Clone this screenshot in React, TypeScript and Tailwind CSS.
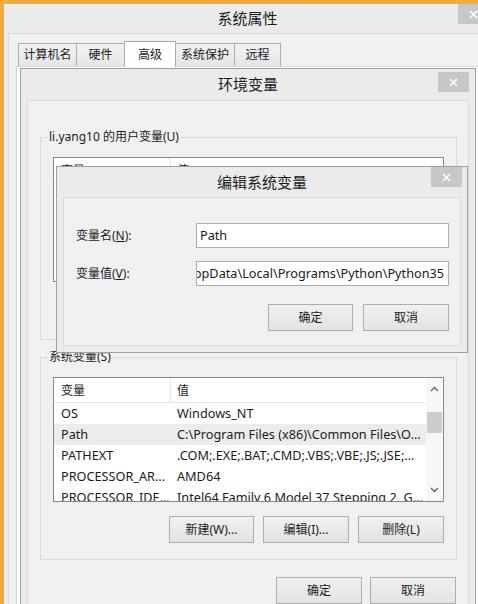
import React from 'react'

type Row = { name: string; value: string; selected?: boolean }

const systemRows: Row[] = [
  { name: 'OS', value: 'Windows_NT' },
  { name: 'Path', value: 'C:\\Program Files (x86)\\Common Files\\O...', selected: true },
  { name: 'PATHEXT', value: '.COM;.EXE;.BAT;.CMD;.VBS;.VBE;.JS;.JSE;...' },
  { name: 'PROCESSOR_AR...', value: 'AMD64' },
  { name: 'PROCESSOR_IDE...', value: 'Intel64 Family 6 Model 37 Stepping 2, G...' },
]

const userRows: Row[] = [
  { name: 'PATH', value: 'C:\\Users\\li.yang10\\AppData\\Local\\Programs\\...' },
  { name: 'TEMP', value: '%USERPROFILE%\\AppData\\Local\\Temp' },
  { name: 'TMP', value: '%USERPROFILE%\\AppData\\Local\\Temp' },
]

const tabs = [
  { label: '计算机名', w: 'w-[59px]' },
  { label: '硬件', w: 'w-[47px]' },
  { label: '高级', w: 'w-[52px]', active: true },
  { label: '系统保护', w: 'w-[59px]' },
  { label: '远程', w: 'w-[46px]' },
]

function CloseButton() {
  return (
    <div className="flex h-[20px] w-[31px] items-center justify-center bg-[#c7c7c7]">
      <svg width="9" height="9" viewBox="0 0 9 9">
        <path d="M1 1L8 8M8 1L1 8" stroke="#ffffff" strokeWidth="1.6" />
      </svg>
    </div>
  )
}

function Button({ label, w = 'w-[86px]' }: { label: string; w?: string }) {
  return (
    <div
      className={`flex h-[27px] ${w} items-center justify-center border border-[#adadad] bg-linear-to-b from-[#f0f0f0] to-[#e3e3e3] text-[12px] text-[#1b1b1b]`}
    >
      {label}
    </div>
  )
}

function Chevron({ up }: { up?: boolean }) {
  return (
    <svg width="9" height="6" viewBox="0 0 9 6">
      <path
        d={up ? 'M1 5L4.5 1.5L8 5' : 'M1 1L4.5 4.5L8 1'}
        stroke="#5f5f5f"
        strokeWidth="1.3"
        fill="none"
      />
    </svg>
  )
}

function VarList({ rows }: { rows: Row[] }) {
  return (
    <div className="flex h-[125px] w-[391px] overflow-hidden border border-[#828790] bg-white text-[#1b1b1b]">
      <div className="flex flex-1 flex-col">
        <div className="flex h-[25px] shrink-0 border-b border-[#e5e5e5] text-[12px]">
          <div className="flex w-[117px] items-center border-r border-[#e5e5e5] pl-[7px] pt-[1px]">变量</div>
          <div className="flex items-center pl-[6px] pt-[1px]">值</div>
        </div>
        {rows.map((r) => (
          <div
            key={r.name}
            className={`flex h-[21px] shrink-0 items-center whitespace-nowrap text-[12.7px] ${r.selected ? 'bg-[#ececec]' : ''}`}
          >
            <div className="w-[117px] overflow-hidden pl-[7px]">{r.name}</div>
            <div className="flex-1 overflow-hidden pl-[6px]">{r.value}</div>
          </div>
        ))}
      </div>
      <div className="flex w-[17px] flex-col items-center bg-[#f7f7f7]">
        <div className="flex h-[21px] items-center">
          <Chevron up />
        </div>
        <div className="mt-[13px] h-[21px] w-[15px] bg-[#cdcdcd]" />
        <div className="flex-1" />
        <div className="flex h-[22px] items-center">
          <Chevron />
        </div>
      </div>
    </div>
  )
}

function VarGroup({
  title,
  rows,
  buttons,
  className = '',
}: {
  title: string
  rows: Row[]
  buttons: string[]
  className?: string
}) {
  return (
    <fieldset className={`border border-[#d9d9d9] p-0 ${className}`}>
      <legend className="ml-[7px] px-[1px] text-[12px] leading-[16px] text-[#1b1b1b]">{title}</legend>
      <div className="flex flex-col px-[12px] pb-[16px] pt-[12px]">
        <VarList rows={rows} />
        <div className="mt-[14px] flex justify-end gap-[9px]">
          {buttons.map((b, i) => (
            <Button key={b} label={b} w={i === 0 ? 'w-[85px]' : 'w-[86px]'} />
          ))}
        </div>
      </div>
    </fieldset>
  )
}

export default function App() {
  return (
    <div className="relative h-[604px] w-[478px] overflow-hidden bg-[#f2ab38] font-['Noto_Sans','Noto_Sans_CJK_SC',sans-serif] text-[#1b1b1b]">
      {/* 系统属性 */}
      <div className="absolute left-[3px] top-[3px] flex h-[640px] w-[488px] flex-col border-l border-t border-[#b4b4b4] bg-[#ebebeb]">
        <div className="grid h-[29px] shrink-0 grid-cols-[1fr_auto_1fr]">
          <div />
          <div className="self-center text-[15px]">系统属性</div>
          <div className="mr-[2px] justify-self-end">
            <CloseButton />
          </div>
        </div>
        <div className="ml-[4px] flex flex-1 flex-col border-l border-t border-[#d9d9d9] bg-[#f0f0f0]">
          <div className="relative z-10 flex h-[33px] items-end pl-[9px] text-[12px]">
            {tabs.map((t, i) =>
              t.active ? (
                <div
                  key={t.label}
                  className={`flex h-[26px] ${t.w} items-start justify-center border border-b-0 border-[#acacac] bg-white pt-[4px]`}
                >
                  {t.label}
                </div>
              ) : (
                <div
                  key={t.label}
                  className={`mb-[1px] flex h-[23px] ${t.w} items-center justify-center border-t border-[#acacac] bg-linear-to-b from-[#f2f2f2] to-[#e6e6e6] ${
                    i === 0 ? 'border-l' : ''
                  } ${i === tabs.length - 1 ? 'border-r' : ''} ${tabs[i + 1]?.active ? '' : 'border-r'}`}
                >
                  {t.label}
                </div>
              )
            )}
          </div>
          <div className="-mt-[1px] ml-[7px] flex-1 border border-[#d9d9d9] bg-white" />
        </div>
      </div>

      {/* 环境变量 */}
      <div className="absolute left-[20px] top-[68px] flex h-[560px] w-[456px] flex-col border border-[#a0a0a0] bg-[#ebebeb]">
        <div className="grid h-[31px] shrink-0 grid-cols-[1fr_auto_1fr]">
          <div />
          <div className="self-center text-[15px]">环境变量</div>
          <div className="mr-[6px] mt-[3px] justify-self-end">
            <CloseButton />
          </div>
        </div>
        <div className="mx-[6px] flex flex-1 flex-col border border-[#d9d9d9] bg-[#f0f0f0] pl-[12px] pr-[11px]">
          <VarGroup
            title="li.yang10 的用户变量(U)"
            rows={userRows}
            buttons={['新建(N)...', '编辑(E)...', '删除(D)']}
            className="mt-[28px]"
          />
          <VarGroup
            title="系统变量(S)"
            rows={systemRows}
            buttons={['新建(W)...', '编辑(I)...', '删除(L)']}
            className="mt-[9px]"
          />
          <div className="mt-[17px] flex justify-end gap-[8px] pr-[1px]">
            <Button label="确定" />
            <Button label="取消" />
          </div>
        </div>
      </div>

      {/* 编辑系统变量 */}
      <div className="absolute left-[56px] top-[166px] flex h-[187px] w-[412px] flex-col border border-[#a0a0a0] bg-[#ebebeb]">
        <div className="grid h-[30px] shrink-0 grid-cols-[1fr_auto_1fr]">
          <div />
          <div className="self-center text-[15px]">编辑系统变量</div>
          <div className="mr-[5px] justify-self-end">
            <CloseButton />
          </div>
        </div>
        <div className="mx-[6px] mb-[6px] flex flex-1 border border-[#d9d9d9] bg-[#f0f0f0] pl-[12px] pt-[25px]">
          <div className="flex flex-col text-[12px]">
            <div className="flex h-[25px] items-center">
              <div className="w-[120px]">
                变量名(<span className="underline">N</span>):
              </div>
              <div className="flex h-[25px] w-[253px] items-center border border-[#abadb3] bg-white px-[3px] text-[12.7px]">
                Path
              </div>
            </div>
            <div className="mt-[13px] flex h-[25px] items-center">
              <div className="w-[120px]">
                变量值(<span className="underline">V</span>):
              </div>
              <div className="flex h-[25px] w-[253px] items-center justify-end overflow-hidden whitespace-nowrap border border-[#abadb3] bg-white pr-[4px] text-[12.7px]">
                C:\Users\li.yang10\AppData\Local\Programs\Python\Python35
              </div>
            </div>
            <div className="mt-[18px] flex justify-end gap-[10px]">
              <Button label="确定" w="w-[85px]" />
              <Button label="取消" />
            </div>
          </div>
        </div>
      </div>
    </div>
  )
}
